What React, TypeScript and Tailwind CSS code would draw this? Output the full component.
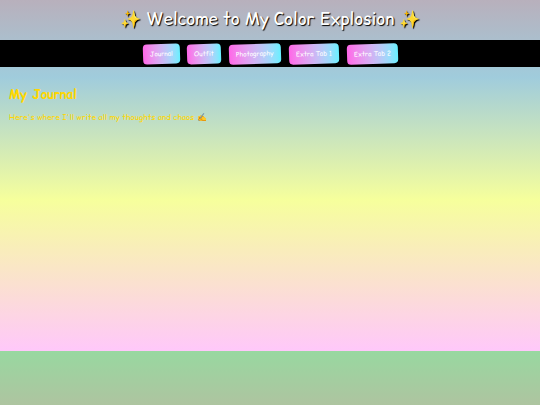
const tabs = [
  { label: 'Journal', tilt: '-rotate-2' },
  { label: 'Outfit', tilt: '-rotate-2' },
  { label: 'Photography', tilt: '-rotate-2' },
  { label: 'Extra Tab 1', tilt: '-rotate-2' },
  { label: 'Extra Tab 2', tilt: '-rotate-2' },
];

export default function App() {
  return (
    <div className="h-[405px] w-[540px] overflow-hidden font-['Comic_Relief',cursive]">
      <div className="h-[351px] bg-[linear-gradient(180deg,#b8b0bc_0%,#a0ccdc_22%,#f6ff9c_57%,#ffc8fa_100%)]">
        <header className="flex h-[40px] items-center justify-center">
          <h1 className="text-[17px] text-white [text-shadow:1px_1px_1px_#000]">✨ Welcome to My Color Explosion ✨</h1>
        </header>
        <nav className="flex h-[27px] items-center justify-center gap-[8px] bg-black">
          {tabs.map((tab) => (
            <button
              key={tab.label}
              className={`rounded-[4px] bg-gradient-to-r from-[#ff66e8] to-[#66f0ff] px-[7px] py-[5px] text-[6.5px] text-white ${tab.tilt}`}
            >
              {tab.label}
            </button>
          ))}
        </nav>
        <main className="pl-[9px] pt-[19px]">
          <h2 className="text-[12.5px] font-bold text-[#ffd700]">My Journal</h2>
          <p className="mt-[7px] text-[8px] text-[#ffd700]">Here's where I'll write all my thoughts and chaos ✍️</p>
        </main>
      </div>
      <div className="h-[54px] bg-[linear-gradient(180deg,#98d8a0_0%,#aec4a0_100%)]" />
    </div>
  );
}
